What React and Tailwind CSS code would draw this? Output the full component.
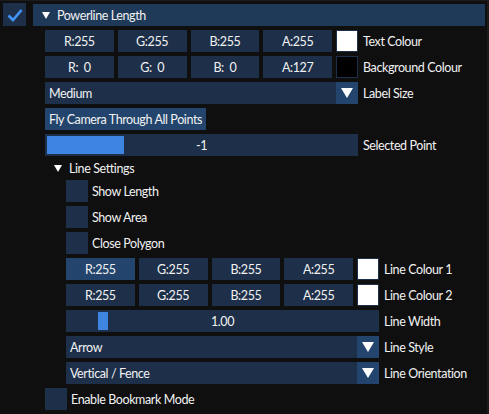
import React from 'react';

const font = { fontFamily: 'Lato, "Noto Sans", sans-serif' };

const Tri = ({ className = '' }) => (
    <svg width="8" height="7" viewBox="0 0 8 7" className={className}>
        <path d="M0 0 L8 0 L4 7 Z" fill="#ffffff" />
    </svg>
);

const ColorRow = ({ values, active, swatch, label }) => (
    <div className="flex items-center h-[22px]">
        <div className="flex w-[313px] gap-1">
            {values.map((v, i) => (
                <div
                    key={i}
                    className={`flex-1 h-[22px] flex items-center justify-center whitespace-pre pt-[2px] ${active && i === 0 ? 'bg-[#23456d]' : 'bg-[#1d2f49]'}`}
                >
                    {v}
                </div>
            ))}
            <div className={`w-[22px] h-[22px] shrink-0 border border-[#1d2f49] ${swatch}`} />
        </div>
        <span className="ml-[5px] pt-[2px]">{label}</span>
    </div>
);

const Combo = ({ value, label }) => (
    <div className="flex items-center h-[22px]">
        <div className="flex w-[313px] h-[22px] bg-[#1d2f49]">
            <span className="flex-1 pl-1 pt-[2px] flex items-center">{value}</span>
            <div className="w-[22px] h-[22px] bg-[#23456d] flex items-center justify-center">
                <svg width="12" height="10" viewBox="0 0 12 10">
                    <path d="M0 0 L12 0 L6 10 Z" fill="#ffffff" />
                </svg>
            </div>
        </div>
        <span className="ml-[5px] pt-[2px]">{label}</span>
    </div>
);

const Slider = ({ value, grabLeft, grabWidth, label }) => (
    <div className="flex items-center h-[22px]">
        <div className="relative w-[313px] h-[22px] bg-[#1d2f49] flex items-center justify-center">
            <div
                className="absolute top-[2px] h-[18px] bg-[#3d85e0]"
                style={{ left: grabLeft, width: grabWidth }}
            />
            <span className="relative pt-[2px]">{value}</span>
        </div>
        <span className="ml-[5px] pt-[2px]">{label}</span>
    </div>
);

const Check = ({ label }) => (
    <div className="flex items-center h-[22px]">
        <div className="w-[22px] h-[22px] bg-[#1d2f49]" />
        <span className="ml-1 pt-[2px]">{label}</span>
    </div>
);

export default function App() {
    return (
        <div className="w-[489px] h-[414px] bg-[#0f0f0f] text-[#f2f2f2] text-[12.5px] tracking-[-0.4px] leading-none overflow-hidden flex" style={font}>
            <div className="flex-1 flex flex-col border-t border-[#1b1b1b]">
                {/* Top row: enable checkbox + collapsing header */}
                <div className="flex items-start pt-[2px]">
                    <div className="ml-[3px] w-[23px] h-[23px] bg-[#1d2f49] flex items-center justify-center">
                        <svg width="16" height="14" viewBox="0 0 16 14">
                            <path d="M1.5 7.5 L6 12 L14.5 2" stroke="#4296fa" strokeWidth="2.6" fill="none" />
                        </svg>
                    </div>
                    <div className="ml-[7px] mt-px w-[452px] h-[22px] bg-[#1f3958] flex items-center">
                        <Tri className="ml-[9px]" />
                        <span className="ml-[7px] pt-[2px]">Powerline Length</span>
                    </div>
                </div>

                <div className="flex flex-col gap-1 mt-1 pl-[45px]">
                    <ColorRow values={['R:255', 'G:255', 'B:255', 'A:255']} swatch="bg-white" label="Text Colour" />
                    <ColorRow values={['R:  0', 'G:  0', 'B:  0', 'A:127']} swatch="bg-black" label="Background Colour" />
                    <Combo value="Medium" label="Label Size" />
                    <div className="h-[22px] flex">
                        <div className="bg-[#23456d] px-1 pt-[2px] flex items-center">Fly Camera Through All Points</div>
                    </div>
                    <Slider value="-1" grabLeft={2} grabWidth={77} label="Selected Point" />

                    <div className="flex items-center h-[16px]">
                        <Tri className="ml-[9px]" />
                        <span className="ml-[7px] pt-[2px]">Line Settings</span>
                    </div>

                    <div className="flex flex-col gap-1 pl-[21px]">
                        <Check label="Show Length" />
                        <Check label="Show Area" />
                        <Check label="Close Polygon" />
                        <ColorRow values={['R:255', 'G:255', 'B:255', 'A:255']} active swatch="bg-white" label="Line Colour 1" />
                        <ColorRow values={['R:255', 'G:255', 'B:255', 'A:255']} swatch="bg-white" label="Line Colour 2" />
                        <Slider value="1.00" grabLeft={32} grabWidth={10} label="Line Width" />
                        <Combo value="Arrow" label="Line Style" />
                        <Combo value="Vertical / Fence" label="Line Orientation" />
                    </div>

                    <Check label="Enable Bookmark Mode" />
                </div>
            </div>
            <div className="w-[2px] bg-[#1c1c1c]" />
        </div>
    );
}
